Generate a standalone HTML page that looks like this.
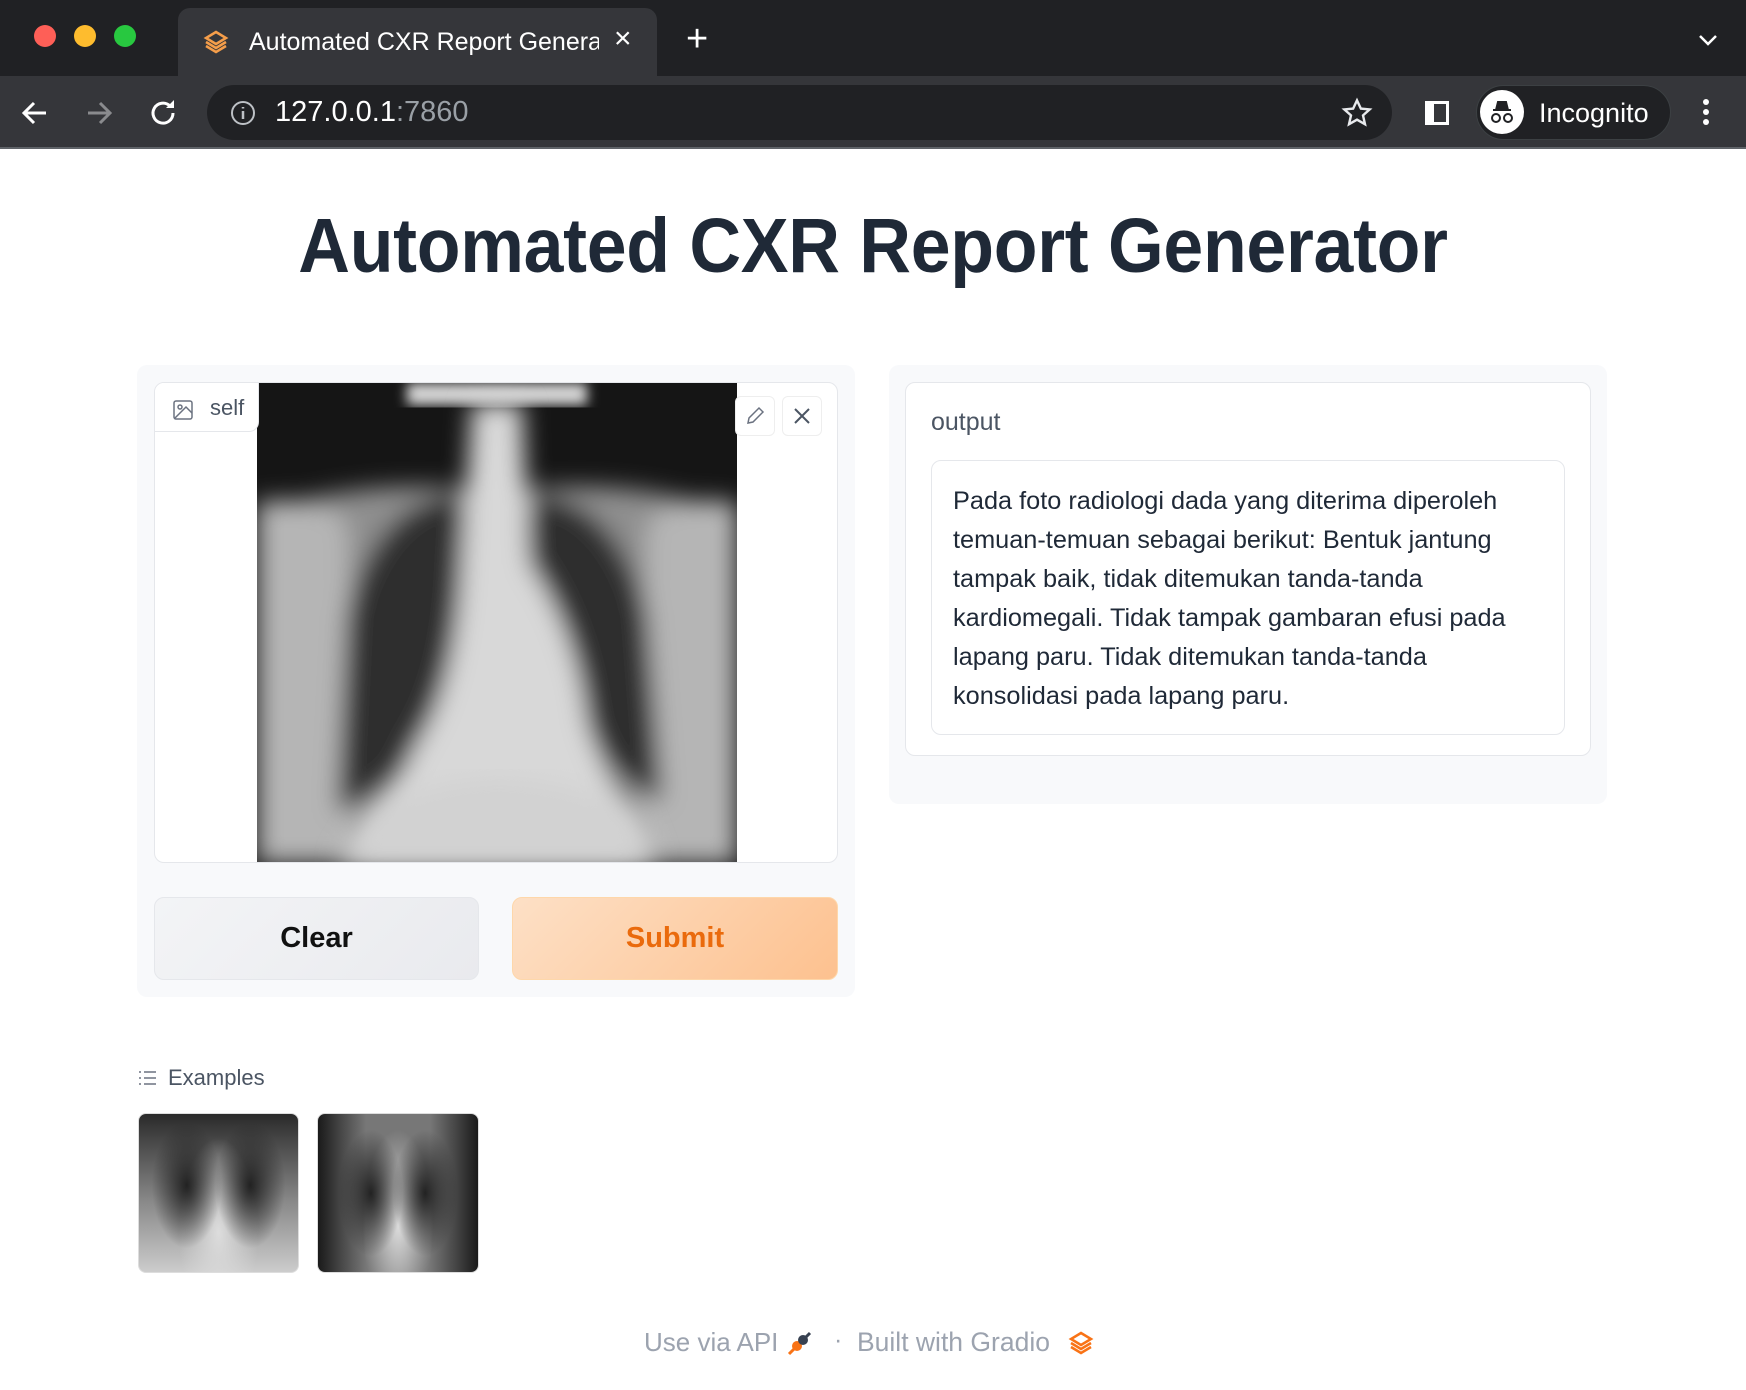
<!DOCTYPE html>
<html><head><meta charset="utf-8"><style>
*{box-sizing:border-box;margin:0;padding:0}
body{width:1746px;height:1390px;overflow:hidden;background:#fff;font-family:"Liberation Sans",sans-serif;position:relative}
.abs{position:absolute}
</style></head><body>
<!-- chrome -->
<div class="abs" style="left:0;top:0;width:1746px;height:76px;background:#202124"></div>
<div class="abs" style="left:34px;top:25px;width:22px;height:22px;border-radius:50%;background:#fe5f57"></div>
<div class="abs" style="left:74px;top:25px;width:22px;height:22px;border-radius:50%;background:#febc2e"></div>
<div class="abs" style="left:114px;top:25px;width:22px;height:22px;border-radius:50%;background:#28c840"></div>
<div class="abs" style="left:178px;top:8px;width:479px;height:70px;background:#35363a;border-radius:12px 12px 0 0"></div>
<svg class="abs" style="left:203px;top:29px" width="26" height="26" viewBox="0 0 26 26"><path d="M13 3 L23 9 L13 15 L3 9Z M3 13 L13 19 L23 13 M3 17 L13 23 L23 17" fill="none" stroke="#f59e4a" stroke-width="2.5"/></svg>
<div class="abs" style="left:249px;top:28px;font-size:25px;color:#fff;white-space:nowrap;width:350px;overflow:hidden">Automated CXR Report Genera</div>
<div class="abs" style="left:614px;top:22px;font-size:30px;color:#fff">×</div>
<div class="abs" style="left:686px;top:18px;font-size:38px;color:#fff;font-weight:300">+</div>
<svg class="abs" style="left:1698px;top:34px" width="20" height="14"><path d="M2 2 L10 10 L18 2" stroke="#fff" stroke-width="2.5" fill="none"/></svg>
<div class="abs" style="left:0;top:76px;width:1746px;height:73px;background:#35363a"></div>
<div class="abs" style="left:0;top:147px;width:1746px;height:2px;background:#5f6368"></div>
<svg class="abs" style="left:18px;top:96px" width="34" height="34"><path d="M28 17 H6 M16 7 L6 17 L16 27" stroke="#fff" stroke-width="3" fill="none"/></svg>
<svg class="abs" style="left:82px;top:96px" width="34" height="34"><path d="M6 17 H28 M18 7 L28 17 L18 27" stroke="#8a8b8e" stroke-width="3" fill="none"/></svg>
<svg class="abs" style="left:147px;top:96px" width="34" height="34"><path d="M26 17 A10 10 0 1 1 23 10" stroke="#fff" stroke-width="3" fill="none"/><path d="M27 4 V12 H19Z" fill="#fff"/></svg>
<div class="abs" style="left:207px;top:85px;width:1185px;height:55px;background:#202124;border-radius:28px"></div>
<svg class="abs" style="left:229px;top:99px" width="28" height="28"><circle cx="14" cy="14" r="11" stroke="#bdc1c6" stroke-width="2" fill="none"/><path d="M14 12 V20 M14 8 V9.5" stroke="#bdc1c6" stroke-width="2.5"/></svg>
<div class="abs" style="left:275px;top:96px;font-size:29px;color:#fff">127.0.0.1<span style="color:#9aa0a6">:7860</span></div>
<svg class="abs" style="left:1341px;top:97px" width="32" height="32" viewBox="0 0 24 24"><path d="M12 2.5l2.9 6.2 6.6.6-5 4.5 1.5 6.6L12 17l-6 3.4 1.5-6.6-5-4.5 6.6-.6z" fill="none" stroke="#e8eaed" stroke-width="1.8"/></svg>
<div class="abs" style="left:1425px;top:101px;width:24px;height:24px;border:3px solid #fff;border-left-width:9px"></div>
<div class="abs" style="left:1476px;top:85px;width:195px;height:55px;background:#202124;border-radius:28px;border:1px solid #3c4043"></div>
<div class="abs" style="left:1480px;top:90px;width:44px;height:44px;border-radius:50%;background:#fff"></div>
<svg class="abs" style="left:1484px;top:94px" width="36" height="36"><path d="M9 16 H27 M12 16 L14 8 H22 L24 16" fill="#202124" stroke="#202124" stroke-width="2"/><circle cx="12" cy="24" r="4" fill="none" stroke="#202124" stroke-width="2"/><circle cx="24" cy="24" r="4" fill="none" stroke="#202124" stroke-width="2"/></svg>
<div class="abs" style="left:1539px;top:98px;font-size:27px;color:#fff">Incognito</div>
<svg class="abs" style="left:1700px;top:96px" width="12" height="34"><circle cx="6" cy="6" r="3" fill="#fff"/><circle cx="6" cy="16" r="3" fill="#fff"/><circle cx="6" cy="26" r="3" fill="#fff"/></svg>

<!-- title -->
<div class="abs" style="left:0;top:202px;width:1746px;text-align:center"><span style="display:inline-block;font-size:77px;font-weight:bold;color:#1f2937;transform:scaleX(0.93);letter-spacing:-0.3px">Automated CXR Report Generator</span></div>

<!-- left panel -->
<div class="abs" style="left:137px;top:365px;width:718px;height:632px;background:#f8f9fb;border-radius:10px"></div>
<div class="abs" style="left:154px;top:382px;width:684px;height:481px;background:#fff;border:1.5px solid #e5e7eb;border-radius:10px;overflow:hidden">
<svg class="abs" style="left:102px;top:0" width="480" height="481" viewBox="0 0 480 481">
<defs>
<filter id="b"><feGaussianBlur stdDeviation="12"/></filter>
<filter id="b2"><feGaussianBlur stdDeviation="6"/></filter>
</defs>
<rect width="480" height="481" fill="#151515"/>
<rect x="150" y="0" width="180" height="22" fill="#d5d5d5" filter="url(#b2)"/>
<g filter="url(#b)">
<path d="M0 130 Q120 90 240 110 Q360 90 480 130 L480 481 L0 481Z" fill="#8f8f8f"/>
<path d="M0 120 Q60 110 90 140 L100 481 L0 481Z" fill="#b5b5b5"/>
<path d="M480 120 Q420 110 390 140 L380 481 L480 481Z" fill="#b5b5b5"/>
<path d="M90 230 Q120 120 200 110 Q230 170 225 290 Q200 340 170 370 Q120 410 80 430 Z" fill="#2e2e2e"/>
<path d="M390 230 Q360 120 280 110 Q255 170 265 270 Q320 330 350 380 Q385 410 405 420 Z" fill="#2e2e2e"/>
<path d="M215 20 H265 L272 180 Q320 250 330 340 L380 481 L100 481 L160 360 Q200 300 205 180Z" fill="#d8d8d8"/>
</g>
<path d="M110 430 Q240 360 380 430 L400 481 L80 481Z" fill="#d2d2d2" filter="url(#b)"/>
</svg>
<div class="abs" style="left:-1px;top:-1px;width:105px;height:50px;background:#fff;border:1.5px solid #e5e7eb;border-radius:0 0 10px 0"></div>
<svg class="abs" style="left:17px;top:16px" width="22" height="22" viewBox="0 0 22 22"><rect x="2" y="2" width="18" height="18" rx="2" fill="none" stroke="#6b7280" stroke-width="1.5"/><circle cx="8" cy="8" r="2" fill="none" stroke="#6b7280" stroke-width="1.5"/><path d="M20 14 L14 8 L3 19" fill="none" stroke="#6b7280" stroke-width="1.5"/></svg>
<div class="abs" style="left:55px;top:12px;font-size:22px;color:#4b5563">self</div>
<div class="abs" style="left:580px;top:13px;width:40px;height:40px;background:#fff;border:1px solid #eee;border-radius:6px"></div>
<svg class="abs" style="left:588px;top:21px" width="24" height="24"><path d="M5 19 L6 14 L16 4 L20 8 L10 18Z" fill="none" stroke="#6b7280" stroke-width="1.5"/></svg>
<div class="abs" style="left:627px;top:13px;width:40px;height:40px;background:#fff;border:1px solid #eee;border-radius:6px"></div>
<svg class="abs" style="left:635px;top:21px" width="24" height="24"><path d="M5 5 L19 19 M19 5 L5 19" stroke="#4b5563" stroke-width="2"/></svg>
</div>
<div class="abs" style="left:154px;top:897px;width:325px;height:83px;background:linear-gradient(135deg,#f3f4f6,#e9eaee);border:1.5px solid #e5e7eb;border-radius:10px;font-size:29px;font-weight:bold;color:#111;text-align:center;line-height:80px">Clear</div>
<div class="abs" style="left:512px;top:897px;width:326px;height:83px;background:linear-gradient(135deg,#fde0c6,#fdc18f);border:1.5px solid #fed7aa;border-radius:10px;font-size:29px;font-weight:bold;color:#ea6a0c;text-align:center;line-height:80px">Submit</div>

<!-- right panel -->
<div class="abs" style="left:889px;top:365px;width:718px;height:439px;background:#f8f9fb;border-radius:10px"></div>
<div class="abs" style="left:905px;top:382px;width:686px;height:374px;background:#fff;border:1.5px solid #e5e7eb;border-radius:10px"></div>
<div class="abs" style="left:931px;top:408px;font-size:25px;color:#4b5563">output</div>
<div class="abs" style="left:931px;top:460px;width:634px;height:275px;border:1.5px solid #e5e7eb;border-radius:10px;padding:21px 0 0 21px;font-size:25.3px;line-height:39px;color:#1f2937;white-space:nowrap">Pada foto radiologi dada yang diterima diperoleh<br>temuan-temuan sebagai berikut: Bentuk jantung<br>tampak baik, tidak ditemukan tanda-tanda<br>kardiomegali. Tidak tampak gambaran efusi pada<br>lapang paru. Tidak ditemukan tanda-tanda<br>konsolidasi pada lapang paru.</div>

<!-- examples -->
<svg class="abs" style="left:138px;top:1068px" width="20" height="20"><path d="M6 4 H18 M6 10 H18 M6 16 H18" stroke="#6b7280" stroke-width="1.5"/><path d="M1 4 H3 M1 10 H3 M1 16 H3" stroke="#6b7280" stroke-width="1.5"/></svg>
<div class="abs" style="left:168px;top:1065px;font-size:22px;color:#4b5563">Examples</div>
<div class="abs" style="left:138px;top:1113px;width:161px;height:160px;border-radius:8px;border:1.5px solid #ddd;overflow:hidden;background:radial-gradient(ellipse 22% 40% at 30% 45%,#222,transparent),radial-gradient(ellipse 22% 40% at 70% 45%,#222,transparent),radial-gradient(ellipse 25% 60% at 50% 75%,#ddd,transparent),linear-gradient(#2a2a2a,#888 55%,#ccc)"></div>
<div class="abs" style="left:317px;top:1113px;width:162px;height:160px;border-radius:8px;border:1.5px solid #ddd;overflow:hidden;background:radial-gradient(ellipse 20% 40% at 33% 50%,#222,transparent),radial-gradient(ellipse 20% 40% at 67% 50%,#222,transparent),radial-gradient(ellipse 22% 60% at 50% 70%,#ddd,transparent),linear-gradient(90deg,#1a1a1a,#777 30%,#777 70%,#1a1a1a)"></div>

<!-- footer -->
<div class="abs" style="left:644px;top:1327px;font-size:26px;color:#9ca3af">Use via API</div>
<svg class="abs" style="left:785px;top:1330px" width="28" height="28"><path d="M4 24 L10 18" stroke="#f97316" stroke-width="3"/><circle cx="12" cy="16" r="5" fill="#f97316"/><circle cx="18" cy="10" r="5" fill="#374151"/><path d="M20 8 L25 3" stroke="#374151" stroke-width="3"/></svg>
<div class="abs" style="left:834px;top:1326px;font-size:25px;color:#9ca3af">·</div>
<div class="abs" style="left:857px;top:1327px;font-size:26.5px;color:#9ca3af">Built with Gradio</div>
<svg class="abs" style="left:1068px;top:1330px" width="26" height="26" viewBox="0 0 26 26"><path d="M13 3 L23 9 L13 15 L3 9Z M3 13 L13 19 L23 13 M3 17 L13 23 L23 17" fill="none" stroke="#f97316" stroke-width="2.5"/></svg>
</body></html>
